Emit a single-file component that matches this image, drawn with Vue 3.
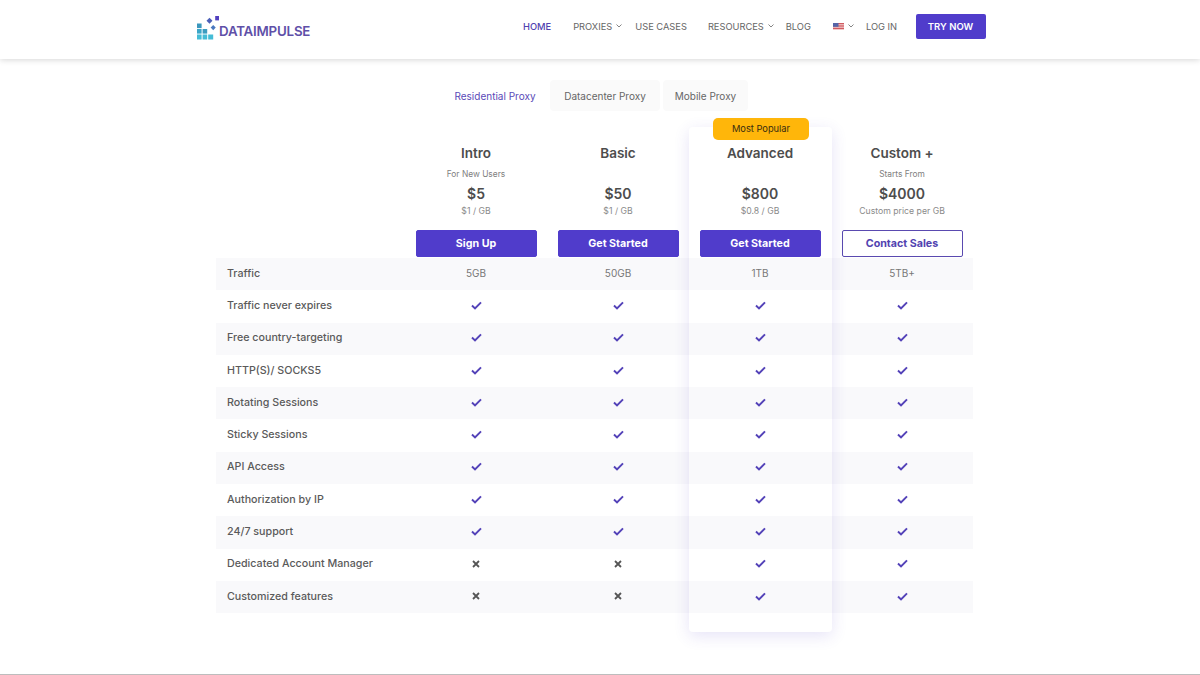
<script setup>
const nav = [
  { label: 'HOME', active: true, mr: 22 },
  { label: 'PROXIES', chevron: true, mr: 13 },
  { label: 'USE CASES', mr: 21 },
  { label: 'RESOURCES', chevron: true, mr: 12 },
  { label: 'BLOG', mr: 22 },
]
const plans = [
  { name: 'Intro', sub: 'For New Users', price: '$5', per: '$1 / GB', cta: 'Sign Up' },
  { name: 'Basic', sub: '', price: '$50', per: '$1 / GB', cta: 'Get Started' },
  { name: 'Advanced', sub: '', price: '$800', per: '$0.8 / GB', cta: 'Get Started' },
  { name: 'Custom +', sub: 'Starts From', price: '$4000', per: 'Custom price per GB', cta: 'Contact Sales', outline: true },
]
const rows = [
  { label: 'Traffic', cells: ['5GB', '50GB', '1TB', '5TB+'] },
  { label: 'Traffic never expires', cells: [1, 1, 1, 1] },
  { label: 'Free country-targeting', cells: [1, 1, 1, 1] },
  { label: 'HTTP(S)/ SOCKS5', cells: [1, 1, 1, 1] },
  { label: 'Rotating Sessions', cells: [1, 1, 1, 1] },
  { label: 'Sticky Sessions', cells: [1, 1, 1, 1] },
  { label: 'API Access', cells: [1, 1, 1, 1] },
  { label: 'Authorization by IP', cells: [1, 1, 1, 1] },
  { label: '24/7 support', cells: [1, 1, 1, 1] },
  { label: 'Dedicated Account Manager', cells: [0, 0, 1, 1] },
  { label: 'Customized features', cells: [0, 0, 1, 1] },
]
</script>

<template>
  <div class="page">
    <header class="header">
      <a class="logo">
        <svg class="logo-mark" width="22" height="24" viewBox="0 0 22 24">
          <rect x="0" y="7.5" width="4.6" height="4.6" fill="#3b97bd" />
          <rect x="0" y="13" width="4.6" height="4.6" fill="#3ba6c8" />
          <rect x="0" y="18.5" width="4.6" height="5" fill="#45bcd6" />
          <rect x="5.6" y="13" width="4.6" height="4.6" fill="#3b9cc0" />
          <rect x="5.6" y="18.5" width="4.6" height="5" fill="#45bcd6" />
          <rect x="11.2" y="18.5" width="5" height="5" fill="#45bcd6" />
          <rect x="10.4" y="2.6" width="4.2" height="4.2" fill="#4c5fb8" transform="rotate(45 12.5 4.7)" />
          <rect x="14.4" y="9.8" width="3.6" height="3.6" fill="#4a78c0" transform="rotate(45 16.2 11.6)" />
          <rect x="18.2" y="0" width="4" height="4.4" fill="#5240bf" />
        </svg>
        <span class="logo-text">DATAIMPULSE</span>
      </a>
      <nav class="nav">
        <template v-for="item in nav" :key="item.label">
          <span class="nav-link" :class="{ active: item.active }" :style="{ marginRight: item.mr + 'px' }">
            {{ item.label }}
            <svg v-if="item.chevron" class="chev" width="6" height="4" viewBox="0 0 6 4"><polyline points="0.5,0.5 3,3 5.5,0.5" /></svg>
          </span>
        </template>
        <svg class="flag" width="11" height="7" viewBox="0 0 11 7">
          <rect width="11" height="7" fill="#f0c8c8" />
          <rect y="0" width="11" height="1.2" fill="#d05a60" />
          <rect y="2.4" width="11" height="1.2" fill="#d05a60" />
          <rect y="4.8" width="11" height="1.2" fill="#d05a60" />
          <rect width="5.5" height="3.8" fill="#5565a8" />
        </svg>
        <svg class="chev lang-chev" width="6" height="4" viewBox="0 0 6 4"><polyline points="0.5,0.5 3,3 5.5,0.5" /></svg>
        <span class="nav-link login">LOG IN</span>
        <button class="try">TRY NOW</button>
      </nav>
    </header>

    <main class="main">
      <div class="tabs">
        <span class="tab current">Residential Proxy</span>
        <span class="tab dc">Datacenter Proxy</span>
        <span class="tab mobile">Mobile Proxy</span>
      </div>

      <section class="pricing">
        <div class="featured" aria-hidden="true"></div>
        <span class="badge">Most Popular</span>

        <div class="grid head">
          <div></div>
          <div v-for="p in plans" :key="p.name" class="plan">
            <h3 class="plan-name">{{ p.name }}</h3>
            <div class="plan-sub">{{ p.sub }}</div>
            <div class="plan-price">{{ p.price }}</div>
            <div class="plan-per">{{ p.per }}</div>
            <button class="cta" :class="{ outline: p.outline }">{{ p.cta }}</button>
          </div>
        </div>

        <div class="rows">
          <div v-for="r in rows" :key="r.label" class="grid row">
            <div class="label">{{ r.label }}</div>
            <div v-for="(c, i) in r.cells" :key="i" class="cell">
              <svg v-if="c === 1" width="11" height="9" viewBox="0 0 11 9"><polyline class="check" points="1,4.6 4,7.4 10,1.4" /></svg>
              <svg v-else-if="c === 0" width="8" height="8" viewBox="0 0 8 8"><path class="cross" d="M1 1 L7 7 M7 1 L1 7" /></svg>
              <span v-else>{{ c }}</span>
            </div>
          </div>
        </div>
      </section>
    </main>
  </div>
</template>

<style scoped>
.page {
  width: 1200px;
  height: 675px;
  overflow: hidden;
  position: relative;
  background: #fff;
  border-bottom: 1px solid #bdbdbd;
  box-sizing: border-box;
  font-family: Inter, "Liberation Sans", sans-serif;
  color: #555;
}
.header {
  height: 59px;
  box-sizing: border-box;
  display: flex;
  align-items: center;
  padding-left: 197px;
  box-shadow: 0 1px 6px rgba(0, 0, 0, 0.16);
}
.logo {
  display: flex;
  align-items: flex-end;
  width: 326px;
  height: 24px;
  margin-top: -3px;
}
.logo-text {
  font-size: 13.3px;
  font-weight: 600;
  color: #5f50a8;
  line-height: 17px;
  letter-spacing: -0.2px;
}
.nav {
  display: flex;
  align-items: center;
  margin-top: -7px;
}
.nav-link {
  font-size: 9.3px;
  color: #666;
  display: flex;
  align-items: center;
  white-space: nowrap;
}
.nav-link.active {
  color: #5142b0;
  font-weight: 500;
}
.chev {
  margin-left: 4px;
  fill: none;
  stroke: #666;
  stroke-width: 0.8;
}
.lang-chev {
  margin-right: 12px;
}
.login {
  margin-right: 18.5px;
}
.try {
  width: 70px;
  height: 25px;
  border: 0;
  border-radius: 2px;
  background: #503ccb;
  color: #fff;
  font: 600 9.5px Inter, "Liberation Sans", sans-serif;
}
.main {
  padding-top: 21px;
}
.tabs {
  display: flex;
  height: 31px;
  padding-left: 439px;
  gap: 3px;
  font-size: 10px;
}
.tab {
  display: flex;
  align-items: center;
  justify-content: center;
  border-radius: 4px;
  background: #fafafa;
  color: #666;
}
.tab.current {
  width: 108px;
  padding-left: 4px;
  box-sizing: border-box;
  background: none;
  color: #5a4ab8;
}
.tab.dc {
  width: 110px;
}
.tab.mobile {
  width: 85px;
}
.pricing {
  position: relative;
  margin-left: 216px;
  width: 757px;
  margin-top: 16px;
}
.featured {
  position: absolute;
  left: 473px;
  top: 0;
  width: 143px;
  height: 505px;
  border-radius: 4px;
  box-shadow: 0 4px 16px rgba(80, 60, 200, 0.14);
  pointer-events: none;
}
.badge {
  position: absolute;
  left: 497px;
  top: -9px;
  width: 96px;
  height: 22px;
  padding-bottom: 2px;
  box-sizing: border-box;
  display: flex;
  align-items: center;
  justify-content: center;
  background: #ffb60a;
  border-radius: 5px;
  color: #3a2c10;
  font-size: 9.3px;
  z-index: 1;
}
.grid {
  display: grid;
  grid-template-columns: 189px repeat(4, 142px);
}
.head {
  height: 131px;
}
.plan {
  display: flex;
  flex-direction: column;
  align-items: center;
  text-align: center;
}
.plan-name {
  margin: 18px 0 0;
  font-size: 13.5px;
  line-height: 16px;
  font-weight: 600;
  color: #4d4d4d;
}
.plan-sub {
  margin-top: 8px;
  height: 11px;
  line-height: 11px;
  font-size: 8.4px;
  color: #808080;
}
.plan-price {
  margin-top: 5px;
  font-size: 14px;
  line-height: 17px;
  font-weight: 600;
  color: #4d4d4d;
}
.plan-per {
  margin-top: 4px;
  font-size: 8.7px;
  line-height: 10px;
  color: #8a8a8a;
}
.cta {
  margin-top: 14px;
  width: 121px;
  height: 27px;
  box-sizing: border-box;
  border: 1px solid #503ccb;
  border-radius: 2px;
  background: #503ccb;
  color: #fff;
  font: 700 10.7px Inter, "Liberation Sans", sans-serif;
}
.cta.outline {
  background: #fff;
  color: #5142b0;
  border-color: #5a4ab0;
}
.row {
  height: 32.3px;
  align-items: center;
}
.row:nth-child(odd) {
  background: #f9f9fb;
}
.label {
  padding-left: 11px;
  padding-bottom: 2px;
  font-size: 10.7px;
  font-weight: 500;
  color: #5a5a5a;
  white-space: nowrap;
}
.cell {
  display: flex;
  align-items: center;
  justify-content: center;
  padding-bottom: 2px;
  font-size: 10px;
  color: #777;
}
.check {
  fill: none;
  stroke: #5342b8;
  stroke-width: 2;
}
.cross {
  fill: none;
  stroke: #555;
  stroke-width: 1.8;
}
</style>
